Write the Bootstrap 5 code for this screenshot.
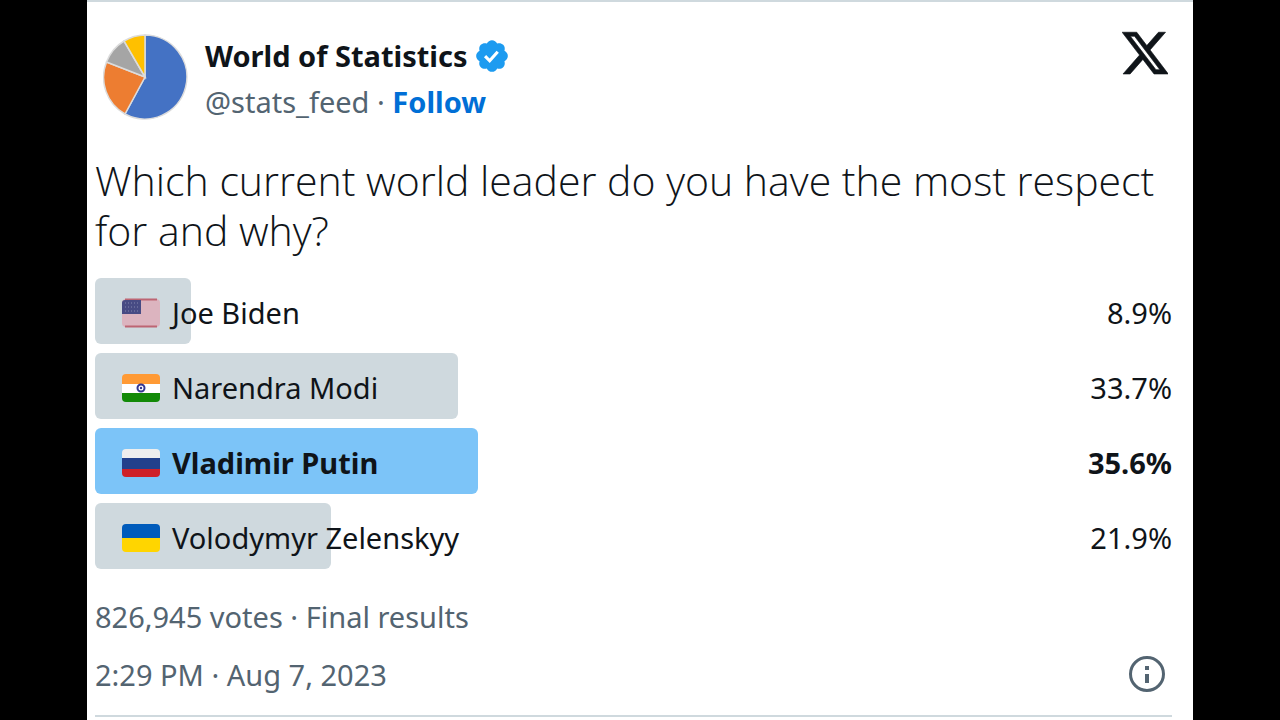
<!DOCTYPE html>
<html lang="en">
<head>
<meta charset="utf-8">
<meta name="viewport" content="width=device-width, initial-scale=1">
<title>World of Statistics poll</title>
<link href="https://cdn.jsdelivr.net/npm/bootstrap@5.3.0/dist/css/bootstrap.min.css" rel="stylesheet">
<style>
  body { background: #000; color: #0f1419; font-family: "Noto Sans", "Open Sans", sans-serif; font-size: 29px; font-weight: 400; line-height: 40px; }
  svg { display: block; flex: none; }
  a { text-decoration: none; }
  .post { margin: 0 87px; min-height: 100vh; padding: 28px 21px 0 8px; background: #fff; border-top: 2px solid #cfd9de; }
  .author { font-weight: 700; line-height: 46px; color: #0f1419; }
  .names { padding-top: 3px; }
  .handle { line-height: 46px; }
  .dim { color: #536471; }
  .follow { color: #006fd6; font-weight: 700; }
  .question { font-family: "Open Sans", "Noto Sans", sans-serif; font-size: 41px; font-weight: 300; line-height: 50px; margin: 30px 0 23px; }
  .poll { gap: 9px; }
  .choice { height: 66px; padding: 3px 0 0 27px; }
  .fill { background: #cfd9de; border-radius: 6px; }
  .winner { font-weight: 700; }
  .winner .fill { background: #7cc4f8; }
  .choice-text { gap: 12px; }
  .votes { margin-top: 28px; }
  .posted { margin-top: 18px; padding-bottom: 20px; border-bottom: 2px solid #cfd9de; }
</style>
</head>
<body>
<main class="post">
  <header class="d-flex align-items-start">
    <svg width="86" height="86" viewBox="-43 -43 86 86" class="ms-2 mt-1" role="img" aria-label="World of Statistics avatar">
      <g stroke="#dcdcdc" stroke-width="1.500">
        <path fill="#4472c4" d="M-1 0V-42A42 42 0 1 1-21 37Z"/>
        <path fill="#ed7d31" d="M-1 0L-21 37A42 42 0 0 1-39.500-15Z"/>
        <path fill="#a5a5a5" d="M-1 0L-39.500-15A42 42 0 0 1-22-36Z"/>
        <path fill="#ffc000" d="M-1 0L-22-36A42 42 0 0 1-1-42Z"/>
      </g>
    </svg>
    <div class="names ms-3 flex-grow-1">
      <div class="d-flex align-items-center gap-2">
        <a href="#" class="author">World of Statistics</a>
        <svg width="34" height="34" viewBox="1 1 22 22" role="img" aria-label="Verified account">
          <path fill="#1d9bf0" d="M22.250 12c0-1.430-.880-2.670-2.190-3.340.460-1.390.200-2.900-.810-3.910s-2.520-1.270-3.910-.810c-.660-1.310-1.910-2.190-3.340-2.190s-2.670.880-3.330 2.190c-1.400-.460-2.910-.200-3.920.810s-1.260 2.520-.800 3.910c-1.310.670-2.200 1.910-2.200 3.340s.890 2.670 2.200 3.340c-.460 1.390-.210 2.900.800 3.910s2.520 1.260 3.910.810c.670 1.310 1.910 2.190 3.340 2.190s2.680-.880 3.340-2.190c1.390.450 2.900.200 3.910-.810s1.270-2.520.810-3.910c1.310-.670 2.190-1.910 2.190-3.340z"/>
          <path fill="none" stroke="#fff" stroke-width="2" d="M7.500 12.100l3 3 5.200-5.800"/>
        </svg>
      </div>
      <div class="handle"><a href="#" class="dim">@stats_feed</a> <span class="dim">·</span> <a href="#" class="follow">Follow</a></div>
    </div>
    <a href="#" aria-label="View on X" class="me-1">
      <svg width="46" height="46" viewBox="1.200 1.700 21.500 20.500"><path fill="#0f1419" stroke="#0f1419" stroke-width=".3" d="M18.244 2.250h3.308l-7.227 8.260 8.502 11.240H16.170l-5.214-6.817L4.990 21.750H1.680l7.730-8.835L1.254 2.250H8.080l4.713 6.231zm-1.161 17.520h1.833L7.084 4.126H5.117z"/></svg>
    </a>
  </header>

  <p class="question">Which current world leader do you have the most respect for and why?</p>

  <section class="poll d-flex flex-column" aria-label="Poll results">
    <div class="choice position-relative d-flex align-items-center">
      <div class="fill position-absolute top-0 start-0 h-100" style="width:8.9%"></div>
      <div class="choice-text position-relative d-flex align-items-center flex-grow-1">
        <svg width="38" height="30" viewBox="0 0 38 30"><rect y="1" width="38" height="28" rx="4" fill="#dcb4bf"/><path d="M3 1.500H35M3 28.500H35" stroke="#bd6573" stroke-width="2"/><path fill="#474b84" d="M3 2H19V16H0V5Q0 2 3 2Z"/><path d="M3 5H18M3 9H18M3 13H18" stroke="#8588ae" stroke-width="1" stroke-dasharray="1 2"/></svg>
        <span>Joe Biden</span><span class="ms-auto">8.9%</span>
      </div>
    </div>
    <div class="choice position-relative d-flex align-items-center">
      <div class="fill position-absolute top-0 start-0 h-100" style="width:33.7%"></div>
      <div class="choice-text position-relative d-flex align-items-center flex-grow-1">
        <svg width="38" height="30" viewBox="0 0 38 30"><path fill="#ff9a35" d="M0 11V5Q0 1 4 1H34Q38 1 38 5V11Z"/><path fill="#fff" d="M0 11H38V20H0Z"/><path fill="#138a08" d="M0 20H38V25Q38 29 34 29H4Q0 29 0 25Z"/><circle cx="19" cy="15" r="3.500" fill="#fff" stroke="#353792" stroke-width="2"/><circle cx="19" cy="15" r="1.200" fill="#353792"/></svg>
        <span>Narendra Modi</span><span class="ms-auto">33.7%</span>
      </div>
    </div>
    <div class="choice winner position-relative d-flex align-items-center">
      <div class="fill position-absolute top-0 start-0 h-100" style="width:35.6%"></div>
      <div class="choice-text position-relative d-flex align-items-center flex-grow-1">
        <svg width="38" height="30" viewBox="0 0 38 30"><path fill="#eee" d="M0 10V5Q0 1 4 1H34Q38 1 38 5V10Z"/><path fill="#22408c" d="M0 10H38V21H0Z"/><path fill="#ce2028" d="M0 21H38V25Q38 29 34 29H4Q0 29 0 25Z"/></svg>
        <span>Vladimir Putin</span><span class="ms-auto">35.6%</span>
      </div>
    </div>
    <div class="choice position-relative d-flex align-items-center">
      <div class="fill position-absolute top-0 start-0 h-100" style="width:21.9%"></div>
      <div class="choice-text position-relative d-flex align-items-center flex-grow-1">
        <svg width="38" height="30" viewBox="0 0 38 30"><path fill="#005bbb" d="M0 15V5Q0 1 4 1H34Q38 1 38 5V15Z"/><path fill="#ffd500" d="M0 15H38V25Q38 29 34 29H4Q0 29 0 25Z"/></svg>
        <span>Volodymyr Zelenskyy</span><span class="ms-auto">21.9%</span>
      </div>
    </div>
  </section>

  <p class="votes dim mb-0">826,945 votes · Final results</p>
  <div class="posted dim d-flex align-items-center justify-content-between">
    <a href="#" class="dim">2:29 PM · Aug 7, 2023</a>
    <a href="#" aria-label="About this post" class="me-1">
      <svg width="40" height="40" viewBox="0 0 40 40"><circle cx="19" cy="19" r="16.500" fill="none" stroke="#536471" stroke-width="3"/><path fill="#536471" d="M17 11H21V15H17ZM17 19H21V28H17Z"/></svg>
    </a>
  </div>
</main>
<script src="https://cdn.jsdelivr.net/npm/bootstrap@5.3.0/dist/js/bootstrap.bundle.min.js"></script>
</body>
</html>
